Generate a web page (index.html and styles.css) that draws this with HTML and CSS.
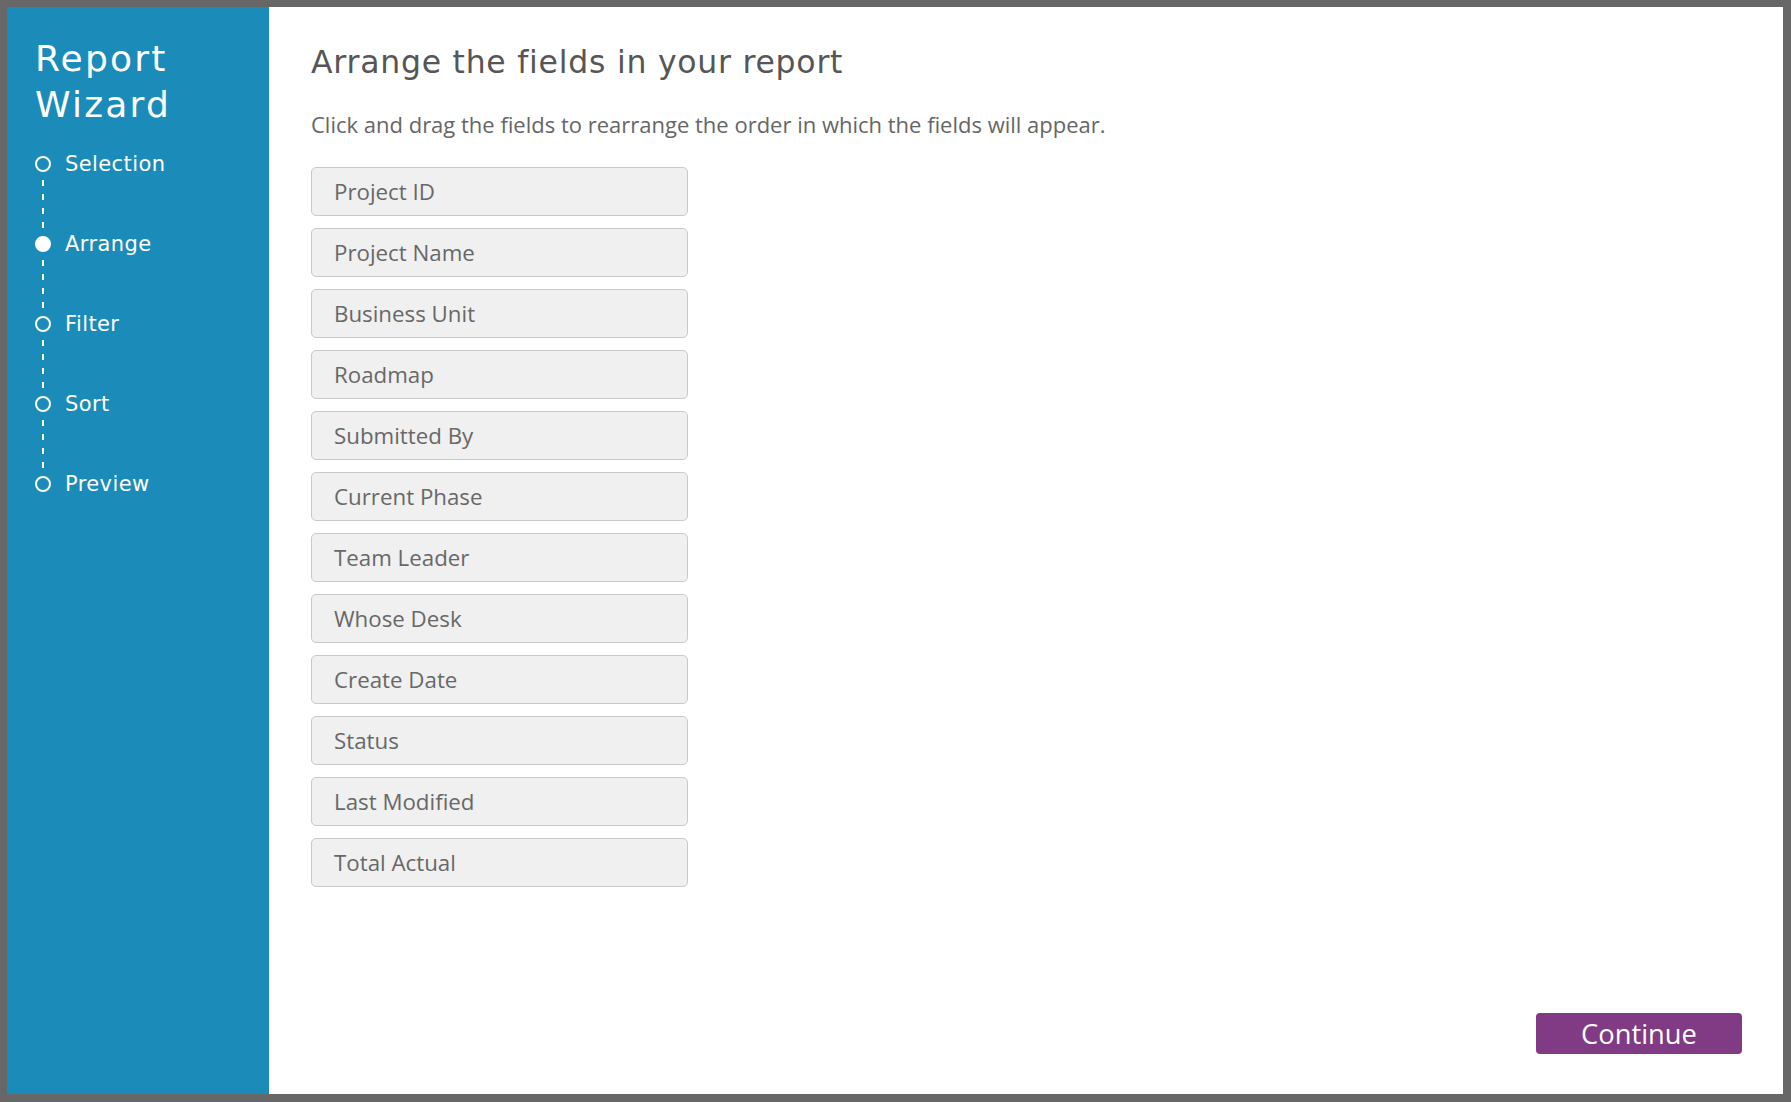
FILE: index.html
```html
<!DOCTYPE html>
<html lang="en">
<head>
<meta charset="utf-8">
<title>Report Wizard</title>
<link rel="stylesheet" href="styles.css">
</head>
<body>
<div class="frame">
  <aside class="sidebar">
    <h1 class="wizard-title">Report<br>Wizard</h1>
    <ol class="steps">
      <li class="step"><span class="dot"></span><span class="step-label">Selection</span></li>
      <li class="connector"></li>
      <li class="step active"><span class="dot"></span><span class="step-label">Arrange</span></li>
      <li class="connector"></li>
      <li class="step"><span class="dot"></span><span class="step-label">Filter</span></li>
      <li class="connector"></li>
      <li class="step"><span class="dot"></span><span class="step-label">Sort</span></li>
      <li class="connector"></li>
      <li class="step"><span class="dot"></span><span class="step-label">Preview</span></li>
    </ol>
  </aside>
  <main class="content">
    <h2 class="page-title">Arrange the fields in your report</h2>
    <p class="intro">Click and drag the fields to rearrange the order in which the fields will appear.</p>
    <ul class="fields">
      <li class="field">Project ID</li>
      <li class="field">Project Name</li>
      <li class="field">Business Unit</li>
      <li class="field">Roadmap</li>
      <li class="field">Submitted By</li>
      <li class="field">Current Phase</li>
      <li class="field">Team Leader</li>
      <li class="field">Whose Desk</li>
      <li class="field">Create Date</li>
      <li class="field">Status</li>
      <li class="field">Last Modified</li>
      <li class="field">Total Actual</li>
    </ul>
    <button class="continue" type="button">Continue</button>
  </main>
</div>
</body>
</html>
```

FILE: styles.css
```css
* {
  box-sizing: border-box;
}

html, body {
  margin: 0;
  height: 100%;
}

body {
  background: #676767;
  padding: 7px 8px 8px 7px;
  font-family: "Open Sans", "Liberation Sans", sans-serif;
}

.frame {
  display: flex;
  height: 100%;
  background: #ffffff;
}

.sidebar {
  width: 262px;
  flex: none;
  background: #1b8bb9;
  color: #ffffff;
  padding: 29px 0 0 28px;
}

.wizard-title {
  margin: 0 0 23.5px 0;
  font-family: "DejaVu Sans", sans-serif;
  font-weight: normal;
  font-size: 36px;
  line-height: 46px;
  letter-spacing: 2.2px;
}

.steps {
  list-style: none;
  margin: 0;
  padding: 0;
}

.step {
  display: flex;
  align-items: center;
  height: 24px;
}

.dot {
  width: 16px;
  height: 16px;
  border: 2px solid #ffffff;
  border-radius: 50%;
  flex: none;
  margin-right: 14px;
}

.step.active .dot {
  background: #ffffff;
}

.step-label {
  font-family: "DejaVu Sans", sans-serif;
  font-size: 21px;
  letter-spacing: 0.4px;
}

.connector {
  width: 2px;
  height: 48px;
  margin: 4px 0 4px 7px;
  background: repeating-linear-gradient(to bottom, #ffffff 0 6px, transparent 6px 14px);
}

.content {
  flex: 1;
  display: flex;
  flex-direction: column;
  padding: 35px 41px 40px 42px;
}

.page-title {
  margin: 0;
  font-family: "DejaVu Sans", sans-serif;
  font-weight: normal;
  font-size: 31.5px;
  line-height: 40px;
  letter-spacing: 0.75px;
  color: #565656;
}

.intro {
  margin: 28px 0 0;
  font-size: 22px;
  line-height: 28px;
  color: #666666;
}

.fields {
  list-style: none;
  margin: 29px 0 0;
  padding: 0;
  display: flex;
  flex-direction: column;
  gap: 12px;
  width: 377px;
}

.field {
  height: 49px;
  display: flex;
  align-items: center;
  padding-left: 22px;
  background: #f0f0f0;
  border: 1.5px solid #c9c9c9;
  border-radius: 5px;
  font-size: 22.3px;
  color: #686868;
}

.continue {
  margin-top: auto;
  align-self: flex-end;
  width: 206px;
  height: 41px;
  border: none;
  border-radius: 4px;
  background: #813b85;
  color: #ffffff;
  font-family: "Open Sans", "Liberation Sans", sans-serif;
  font-size: 27.3px;
  line-height: 41px;
  padding: 0;
}
```
